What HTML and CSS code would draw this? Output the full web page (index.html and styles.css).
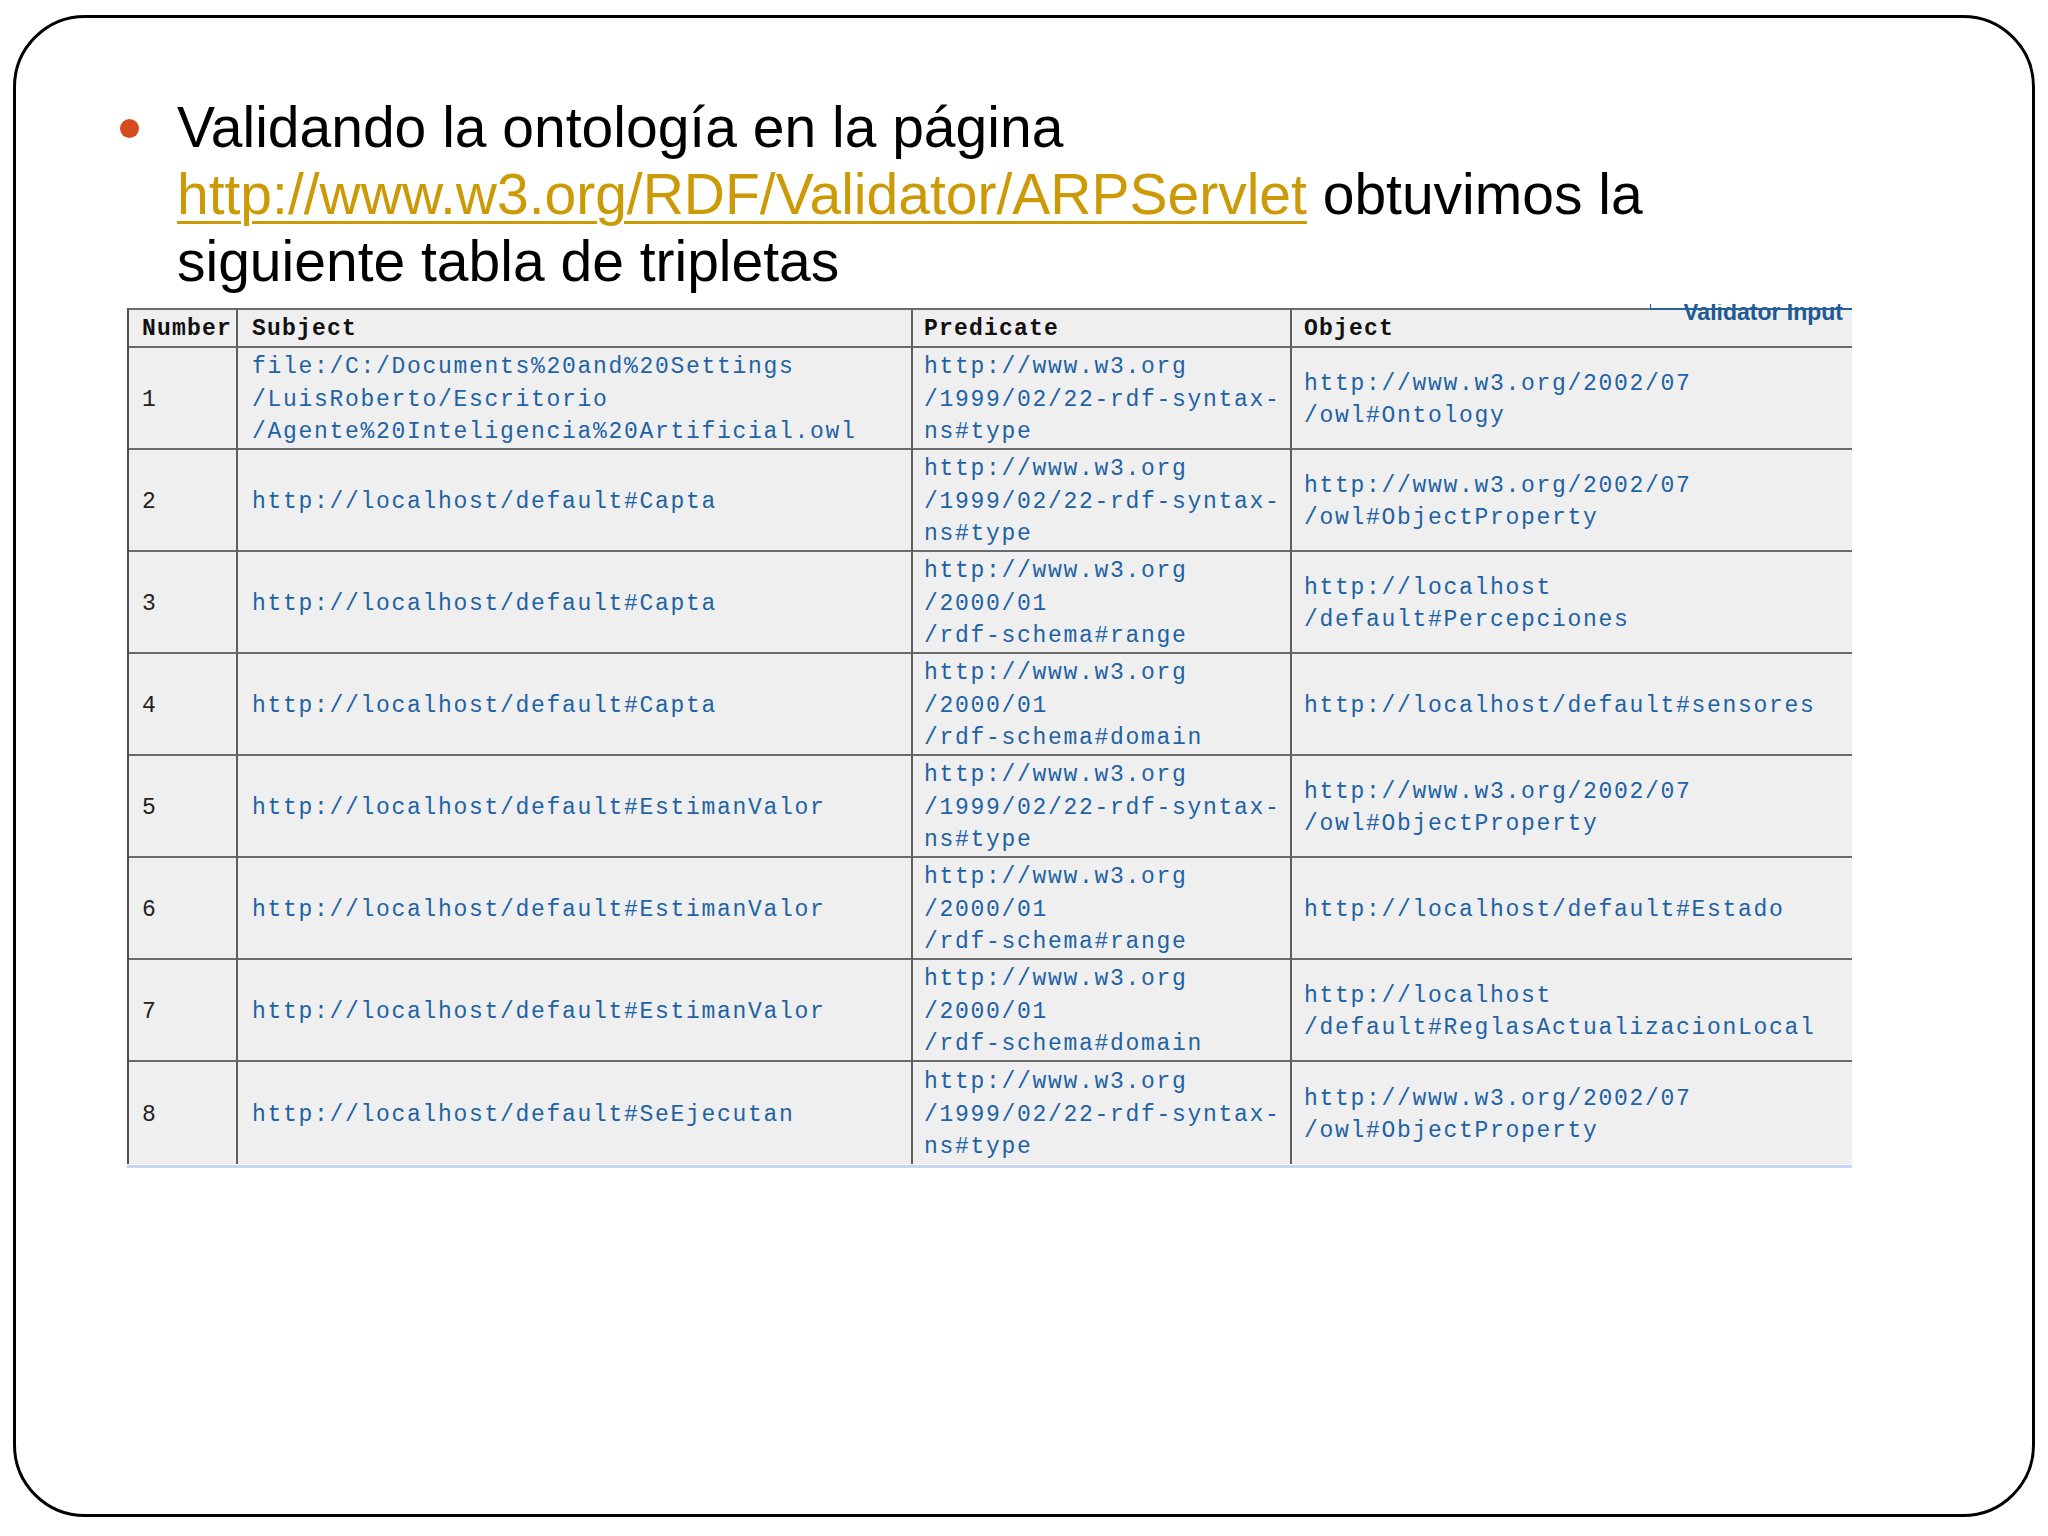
FILE: index.html
```html
<!DOCTYPE html>
<html lang="es">
<head>
<meta charset="utf-8">
<title>Tripletas</title>
<link rel="stylesheet" href="styles.css">
</head>
<body>
<div class="slide">
  <ul class="points">
    <li class="point">
      <span class="bullet"></span>
      <p class="point-text">Validando la ontología en la página<br><a href="#" class="link">http://www.w3.org/RDF/Validator/ARPServlet</a> obtuvimos la<br>siguiente tabla de tripletas</p>
    </li>
  </ul>
  <div class="triples-wrap">
    <div class="triples">
      <div class="cell head c1">Number</div>
      <div class="cell head c2">Subject</div>
      <div class="cell head c3">Predicate</div>
      <div class="cell head c4">Object</div>

      <div class="cell num c1">1</div>
      <div class="cell c2">file:/C:/Documents%20and%20Settings<br>/LuisRoberto/Escritorio<br>/Agente%20Inteligencia%20Artificial.owl</div>
      <div class="cell c3">http://www.w3.org<br>/1999/02/22-rdf-syntax-<br>ns#type</div>
      <div class="cell c4">http://www.w3.org/2002/07<br>/owl#Ontology</div>

      <div class="cell num c1">2</div>
      <div class="cell c2">http://localhost/default#Capta</div>
      <div class="cell c3">http://www.w3.org<br>/1999/02/22-rdf-syntax-<br>ns#type</div>
      <div class="cell c4">http://www.w3.org/2002/07<br>/owl#ObjectProperty</div>

      <div class="cell num c1">3</div>
      <div class="cell c2">http://localhost/default#Capta</div>
      <div class="cell c3">http://www.w3.org<br>/2000/01<br>/rdf-schema#range</div>
      <div class="cell c4">http://localhost<br>/default#Percepciones</div>

      <div class="cell num c1">4</div>
      <div class="cell c2">http://localhost/default#Capta</div>
      <div class="cell c3">http://www.w3.org<br>/2000/01<br>/rdf-schema#domain</div>
      <div class="cell c4">http://localhost/default#sensores</div>

      <div class="cell num c1">5</div>
      <div class="cell c2">http://localhost/default#EstimanValor</div>
      <div class="cell c3">http://www.w3.org<br>/1999/02/22-rdf-syntax-<br>ns#type</div>
      <div class="cell c4">http://www.w3.org/2002/07<br>/owl#ObjectProperty</div>

      <div class="cell num c1">6</div>
      <div class="cell c2">http://localhost/default#EstimanValor</div>
      <div class="cell c3">http://www.w3.org<br>/2000/01<br>/rdf-schema#range</div>
      <div class="cell c4">http://localhost/default#Estado</div>

      <div class="cell num c1">7</div>
      <div class="cell c2">http://localhost/default#EstimanValor</div>
      <div class="cell c3">http://www.w3.org<br>/2000/01<br>/rdf-schema#domain</div>
      <div class="cell c4">http://localhost<br>/default#ReglasActualizacionLocal</div>

      <div class="cell num c1 last">8</div>
      <div class="cell c2 last">http://localhost/default#SeEjecutan</div>
      <div class="cell c3 last">http://www.w3.org<br>/1999/02/22-rdf-syntax-<br>ns#type</div>
      <div class="cell c4 last">http://www.w3.org/2002/07<br>/owl#ObjectProperty</div>
    </div>
    <div class="validator-tab"><span class="validator-label">Validator Input</span></div>
    <div class="triples-foot"></div>
  </div>
</div>
</body>
</html>
```
FILE: styles.css
```css
html, body {
  margin: 0;
  padding: 0;
  background: #ffffff;
}

.slide {
  box-sizing: border-box;
  width: 2022px;
  height: 1502px;
  margin: 15px 0 0 13px;
  border: 3px solid #000000;
  border-radius: 72px;
  padding-top: 76px;
}

.points {
  list-style: none;
  margin: 0;
  padding: 0 0 0 104px;
}

.point {
  display: flex;
  align-items: flex-start;
}

.bullet {
  flex: none;
  width: 19px;
  height: 19px;
  border-radius: 50%;
  background: #d64b1f;
  margin-top: 25px;
  margin-right: 38px;
}

.point-text {
  margin: 0;
  font-family: "Liberation Sans", Arial, sans-serif;
  font-size: 57px;
  line-height: 67px;
  color: #000000;
}

.link {
  color: #cc9a06;
  text-decoration: underline;
  text-decoration-thickness: 3px;
  text-underline-offset: 7px;
}

.triples-wrap {
  position: relative;
  width: 1725px;
  margin: 13px 0 0 111px;
}

.triples {
  display: grid;
  grid-template-columns: 109px 675px 379px 560px;
  grid-template-rows: 38px repeat(8, 102px);
  border-top: 2px solid #6a6a6a;
  border-left: 2px solid #505050;
  background: #efefef;
  font-family: "Liberation Mono", "Courier New", monospace;
  font-size: 23px;
  letter-spacing: 1.7px;
}

.cell {
  box-sizing: border-box;
  display: flex;
  flex-direction: column;
  justify-content: center;
  padding-top: 4px;
  border-right: 2px solid #5e5e5e;
  border-bottom: 2px solid #6a6a6a;
  line-height: 32.5px;
  color: #2162a3;
  white-space: nowrap;
  overflow: hidden;
}

.cell.c1 { padding-left: 13px; }
.cell.c2 { padding-left: 14px; }
.cell.c3 { padding-left: 11px; }
.cell.c4 { padding-left: 12px; border-right: none; }

.cell.num {
  color: #222222;
}

.cell.head {
  padding-top: 1px;
  color: #111111;
  font-weight: bold;
  line-height: 30px;
  letter-spacing: 1.2px;
}

.cell.last {
  border-bottom: none;
}

.validator-tab {
  position: absolute;
  top: -4px;
  left: 1523px;
  width: 202px;
  height: 21px;
  overflow: hidden;
}

.validator-tab::before {
  content: "";
  position: absolute;
  left: 0;
  top: 0;
  width: 1px;
  height: 6px;
  background: #2a5f94;
}

.validator-tab::after {
  content: "";
  position: absolute;
  left: 0;
  right: 0;
  top: 4px;
  height: 2px;
  background: #2a5f94;
}

.validator-label {
  position: absolute;
  right: 9px;
  top: -5px;
  font-family: "Liberation Sans", Arial, sans-serif;
  font-weight: bold;
  font-size: 23px;
  line-height: 26px;
  color: #1c5a94;
  white-space: nowrap;
}

.triples-foot {
  height: 3px;
  margin-top: 1px;
  background: #c6d5f2;
}
```
